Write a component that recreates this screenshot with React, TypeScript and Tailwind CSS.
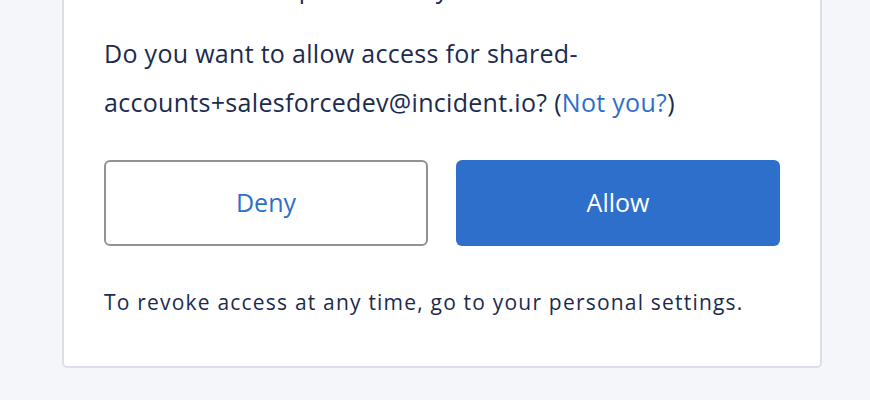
export default function App() {
  return (
    <div className="h-[400px] w-[870px] overflow-hidden bg-[#f4f6f9] font-['Open_Sans',sans-serif] text-[#1b2b4f]">
      <div className="ml-[62px] -mt-[36px] w-[760px] rounded-b-[5px] border-2 border-t-0 border-[#dcdfe8] bg-white px-[40px] pb-[50px]">
        <div className="pl-[56px] text-[25px] leading-[49px] tracking-[0.3px]">Perform requests at any time</div>
        <p className="mt-[16px] text-[25px] leading-[49px] tracking-[0.3px]">
          Do you want to allow access for shared-
          <br />
          accounts+salesforcedev@incident.io? (<a className="text-[#2d6fcc]">Not you?</a>)
        </p>
        <div className="mt-[33px] flex justify-between">
          <button className="h-[86px] w-[324px] rounded-[6px] border-2 border-[#929292] bg-white text-[25px] text-[#2d6fcc]">
            Deny
          </button>
          <button className="h-[86px] w-[324px] rounded-[6px] bg-[#2f6fcc] text-[25px] text-white">
            Allow
          </button>
        </div>
        <p className="mt-[42px] text-[21px] leading-[28px] tracking-[1.2px]">
          To revoke access at any time, go to your personal settings.
        </p>
      </div>
    </div>
  );
}
